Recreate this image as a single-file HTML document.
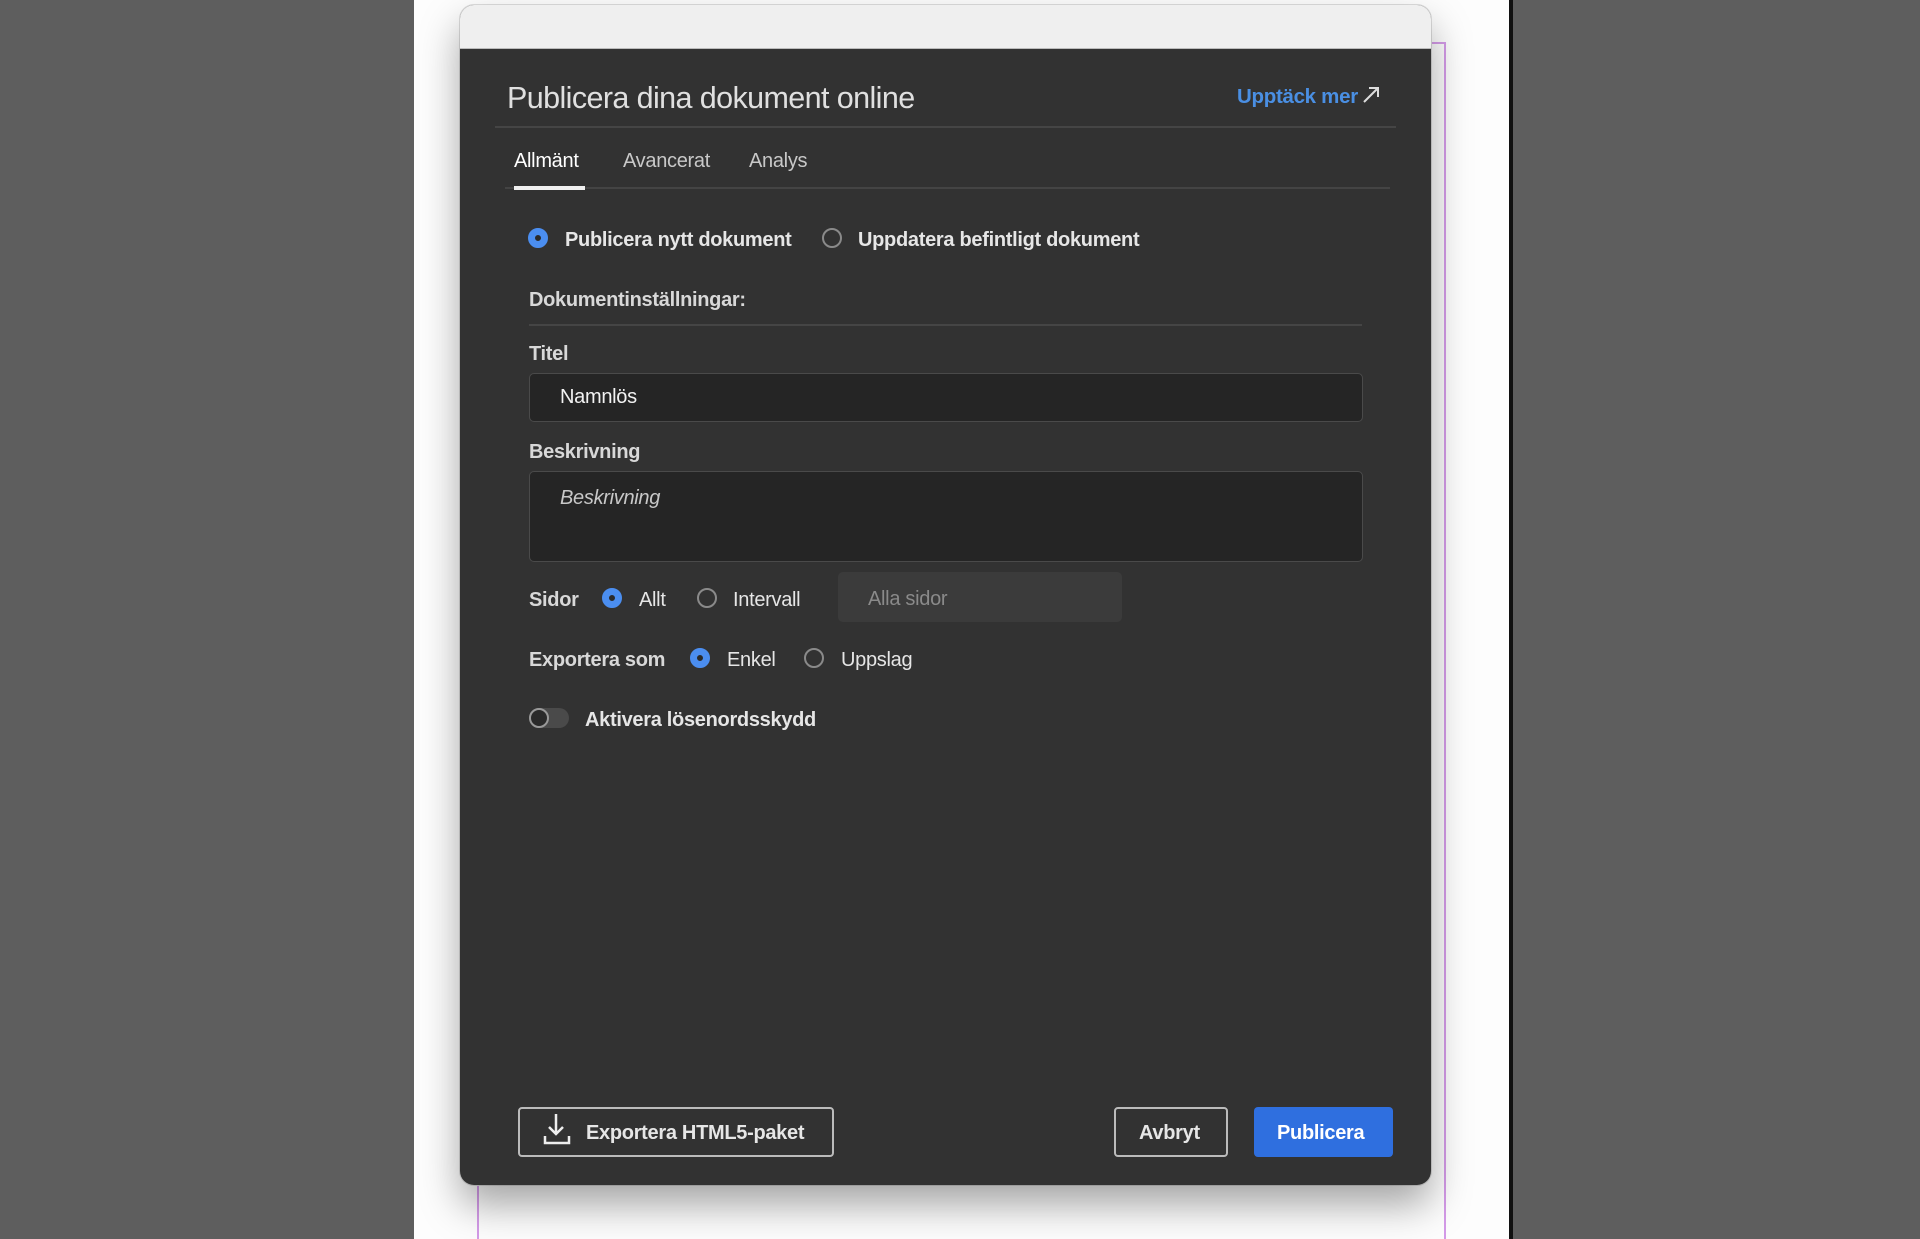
<!DOCTYPE html>
<html><head><meta charset="utf-8">
<style>
*{margin:0;padding:0;box-sizing:border-box}
html,body{width:1920px;height:1239px;overflow:hidden;background:#5e5e5e;font-family:"Liberation Sans",sans-serif}
.abs{position:absolute}
.page{left:414px;top:0;width:1096px;height:1239px;background:#fdfdfd}
.rborder{left:1509px;top:0;width:4px;height:1239px;background:#111}
.dlg{left:460px;top:5px;width:971px;height:1180px;border-radius:14px;overflow:hidden;background:#323232;box-shadow:0 20px 40px rgba(0,0,0,.35),0 0 0 1px #ddd}
.tbar{left:0;top:0;width:971px;height:44px;background:#efefef;border-bottom:1px solid #bbb}
.t{position:absolute;white-space:nowrap;color:#e6e6e6;font-size:20px;font-weight:bold;line-height:24px;letter-spacing:-0.3px}
.n{font-weight:normal}
.radio{position:absolute;width:20px;height:20px;border-radius:50%;border:2px solid #8a8a8a}
.radio.on{border:7px solid #4b8ef0;background:#2a2a2a}
.box{position:absolute;background:#252525;border:1.5px solid #4a4a4a;border-radius:5px}
</style></head><body>
<div class="abs page"></div>
<div class="abs rborder"></div>
<div class="abs" style="left:1444px;top:42px;width:2px;height:1197px;background:#d49be8"></div>
<div class="abs" style="left:1430px;top:42px;width:16px;height:2px;background:#d49be8"></div>
<div class="abs" style="left:477px;top:1185px;width:2px;height:54px;background:#d49be8"></div>
<div class="abs dlg">
 <div class="abs tbar"></div>
 <div class="t n" style="left:47px;top:75px;font-size:30.5px;line-height:36px;color:#e0e0e0;font-weight:normal;letter-spacing:-0.6px">Publicera dina dokument online</div>
 <div class="t" style="left:777px;top:80px;color:#4a8fe3;font-size:20.5px">Upptäck mer</div>
 <svg class="abs" style="left:901px;top:80px" width="20" height="20" viewBox="0 0 20 20"><path d="M3 17L17 3M8 3h9v9" stroke="#ddd" stroke-width="2" fill="none"/></svg>
 <div class="abs" style="left:35px;top:121px;width:901px;height:2px;background:#454545"></div>
 <div class="t n" style="left:54px;top:144px;color:#fff;font-size:20px">Allmänt</div>
 <div class="t n" style="left:163px;top:144px;color:#c8c8c8;font-size:20px">Avancerat</div>
 <div class="t n" style="left:289px;top:144px;color:#c8c8c8;font-size:20px">Analys</div>
 <div class="abs" style="left:45px;top:182px;width:885px;height:2px;background:#444"></div>
 <div class="abs" style="left:54px;top:181px;width:71px;height:4px;background:#f0f0f0"></div>

 <div class="radio on" style="left:68px;top:223px"></div>
 <div class="t" style="left:105px;top:223px">Publicera nytt dokument</div>
 <div class="radio" style="left:362px;top:223px"></div>
 <div class="t" style="left:398px;top:223px">Uppdatera befintligt dokument</div>

 <div class="t" style="left:69px;top:283px;color:#d8d8d8">Dokumentinställningar:</div>
 <div class="abs" style="left:69px;top:319px;width:833px;height:2px;background:#454545"></div>

 <div class="t" style="left:69px;top:337px;color:#d8d8d8">Titel</div>
 <div class="box" style="left:69px;top:368px;width:834px;height:49px"></div>
 <div class="t n" style="left:100px;top:380px;color:#f2f2f2">Namnlös</div>

 <div class="t" style="left:69px;top:435px;color:#d8d8d8">Beskrivning</div>
 <div class="box" style="left:69px;top:466px;width:834px;height:91px"></div>
 <div class="t n" style="left:100px;top:481px;color:#c8c8c8;font-style:italic">Beskrivning</div>

 <div class="t" style="left:69px;top:583px;color:#d8d8d8">Sidor</div>
 <div class="radio on" style="left:142px;top:583px"></div>
 <div class="t n" style="left:179px;top:583px">Allt</div>
 <div class="radio" style="left:237px;top:583px"></div>
 <div class="t n" style="left:273px;top:583px">Intervall</div>
 <div class="abs" style="left:378px;top:567px;width:284px;height:50px;background:#3b3b3b;border-radius:5px"></div>
 <div class="t n" style="left:408px;top:582px;color:#8a8a8a">Alla sidor</div>

 <div class="t" style="left:69px;top:643px;color:#d8d8d8">Exportera som</div>
 <div class="radio on" style="left:230px;top:643px"></div>
 <div class="t n" style="left:267px;top:643px">Enkel</div>
 <div class="radio" style="left:344px;top:643px"></div>
 <div class="t n" style="left:381px;top:643px">Uppslag</div>

 <div class="abs" style="left:69px;top:703px;width:40px;height:20px;border-radius:10px;background:#4a4a4a"></div>
 <div class="abs" style="left:69px;top:703px;width:20px;height:20px;border-radius:50%;border:2px solid #999;background:#2a2a2a"></div>
 <div class="t" style="left:125px;top:703px">Aktivera lösenordsskydd</div>

 <div class="abs" style="left:58px;top:1102px;width:316px;height:50px;border:2px solid #bbb;border-radius:4px"></div>
 <svg class="abs" style="left:82px;top:1108px" width="30" height="32" viewBox="0 0 30 32"><path d="M14 1v20M7 14l7 7 7-7M3 23v7h24v-7" stroke="#eee" stroke-width="2.5" fill="none"/></svg>
 <div class="t" style="left:126px;top:1116px">Exportera HTML5-paket</div>
 <div class="abs" style="left:654px;top:1102px;width:114px;height:50px;border:2px solid #bbb;border-radius:4px"></div>
 <div class="t" style="left:679px;top:1116px">Avbryt</div>
 <div class="abs" style="left:794px;top:1102px;width:139px;height:50px;background:#2f6fdf;border-radius:4px"></div>
 <div class="t" style="left:817px;top:1116px;color:#fff">Publicera</div>
</div>
</body></html>
